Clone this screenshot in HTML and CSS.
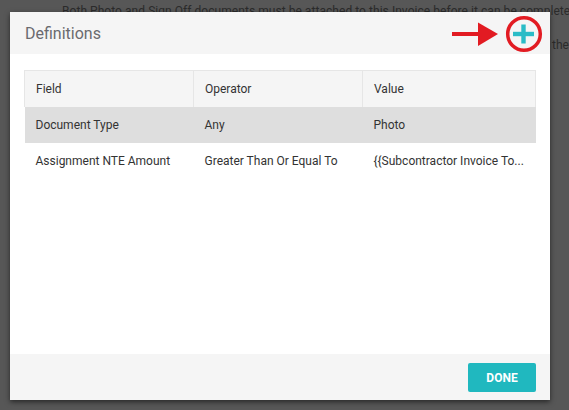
FILE: index.html
```html
<!DOCTYPE html>
<html>
<head>
<meta charset="utf-8">
<link rel="stylesheet" href="styles.css">
</head>
<body>
<div class="page">
  <p class="bg-line">Both Photo and Sign Off documents must be attached to this Invoice before it can be completed. A</p>
  <p class="bg-line bg-line2">Click the plus icon to add a new document definition. The definitions below are checked against the</p>
</div>
<div class="modal">
  <div class="modal-header">
    <span class="title">Definitions</span>
    <svg class="add-icon" width="100" height="42" viewBox="0 0 100 42">
      <rect x="4" y="20" width="28" height="4" fill="#e21b22"/>
      <polygon points="30,10.5 50,22 30,34" fill="#e21b22"/>
      <circle cx="76" cy="22" r="16.3" fill="none" stroke="#e21b22" stroke-width="3.5"/>
      <rect x="65" y="19.8" width="21" height="4.4" fill="#2bbcc7"/>
      <rect x="73.3" y="12.5" width="4.4" height="19" fill="#2bbcc7"/>
    </svg>
  </div>
  <div class="modal-body">
    <table class="grid">
      <thead>
        <tr><th class="c1">Field</th><th class="c2">Operator</th><th>Value</th></tr>
      </thead>
      <tbody>
        <tr class="selected"><td>Document Type</td><td>Any</td><td>Photo</td></tr>
        <tr><td>Assignment NTE Amount</td><td>Greater Than Or Equal To</td><td>{{Subcontractor Invoice To...</td></tr>
      </tbody>
    </table>
  </div>
  <div class="modal-footer">
    <button class="done">DONE</button>
  </div>
</div>
</body>
</html>
```

FILE: styles.css
```css
html, body {
  margin: 0;
  padding: 0;
}
body {
  width: 569px;
  height: 410px;
  overflow: hidden;
  background: #575757;
  font-family: Roboto, "Liberation Sans", sans-serif;
  position: relative;
}
.page {
  padding: 3px 0 0 62px;
}
.bg-line {
  margin: 0;
  font-size: 12px;
  line-height: 17px;
  color: #2b2b2b;
  white-space: nowrap;
  letter-spacing: 0.05px;
}
.bg-line2 {
  margin-top: 17px;
  margin-left: -62px;
  text-align: right;
  width: 569px;
}
.modal {
  position: absolute;
  left: 10px;
  top: 12px;
  width: 540px;
  height: 388px;
  background: #fff;
  box-shadow: 0 2px 5px rgba(0, 0, 0, 0.55);
  display: flex;
  flex-direction: column;
}
.modal-header {
  height: 42px;
  background: #f5f5f5;
  display: flex;
  align-items: center;
  padding-left: 15px;
}
.title {
  font-size: 16px;
  color: #6a6a6e;
}
.add-icon {
  margin-left: auto;
  margin-right: 2px;
  display: block;
}
.modal-body {
  flex: 1;
  padding: 16px 14px;
}
.grid {
  width: 512px;
  border-collapse: collapse;
  table-layout: fixed;
  font-size: 12px;
  color: #333;
}
.grid th, .grid td {
  text-align: left;
  font-weight: normal;
  padding: 0 11px;
  height: 36px;
  white-space: nowrap;
  overflow: hidden;
}
.grid th {
  background: #f5f5f5;
  border: 1px solid #e6e6e6;
  border-bottom: none;
}
.grid th.c1, .grid th.c2 { width: 146px; }
.grid tr.selected td {
  background: #dedede;
}
.modal-footer {
  height: 46px;
  background: #f5f5f5;
  display: flex;
  align-items: center;
  justify-content: flex-end;
  padding-right: 14px;
}
.done {
  width: 68px;
  height: 29px;
  margin-top: 1px;
  border: none;
  border-radius: 2px;
  background: #20b8bf;
  color: #fff;
  font-family: Roboto, "Liberation Sans", sans-serif;
  font-weight: bold;
  font-size: 12px;
  padding: 0;
}
```
